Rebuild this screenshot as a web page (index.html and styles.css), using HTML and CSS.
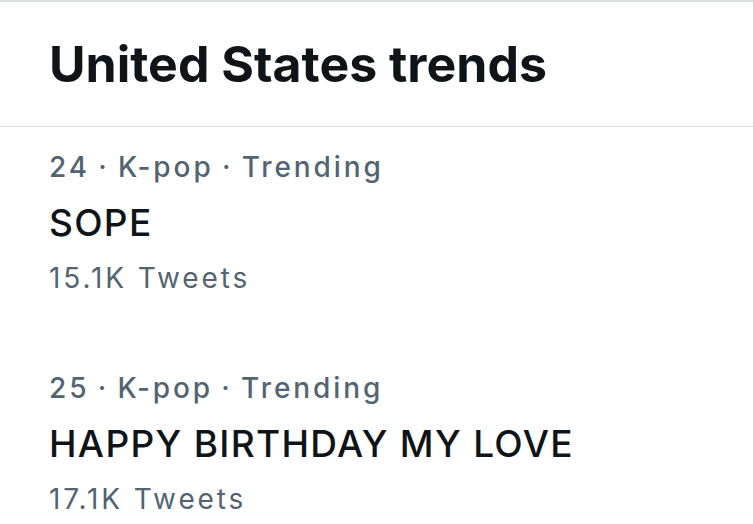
FILE: index.html
```html
<!DOCTYPE html>
<html>
<head>
<meta charset="utf-8">
<link rel="stylesheet" href="styles.css">
</head>
<body>
<div class="page">
  <header class="header">
    <h1 class="title">United States trends</h1>
  </header>
  <ul class="trends">
    <li class="trend">
      <div class="meta">24 · K-pop · Trending</div>
      <div class="name">SOPE</div>
      <div class="count">15.1K Tweets</div>
    </li>
    <li class="trend">
      <div class="meta">25 · K-pop · Trending</div>
      <div class="name">HAPPY BIRTHDAY MY LOVE</div>
      <div class="count">17.1K Tweets</div>
    </li>
  </ul>
</div>
</body>
</html>
```
FILE: styles.css
```css
html, body {
  margin: 0;
  padding: 0;
  background: #ffffff;
}
.page {
  font-family: Inter, "Liberation Sans", sans-serif;
  width: 753px;
  height: 524px;
  overflow: hidden;
  border-top: 2px solid #dcdfe2;
  box-sizing: border-box;
}
.header {
  height: 125px;
  border-bottom: 1px solid #d6dade;
  display: flex;
  align-items: center;
  padding-left: 49px;
  box-sizing: border-box;
}
.title {
  margin: 0;
  font-size: 50px;
  font-weight: 700;
  color: #0f1419;
  letter-spacing: 0;
}
.trends {
  list-style: none;
  margin: 0;
  padding: 0 0 0 49px;
}
.trend {
  padding-top: 20px;
  height: 221px;
  box-sizing: border-box;
}
.meta {
  font-size: 28px;
  color: #536471;
  font-weight: 500;
  line-height: 40px;
  letter-spacing: 2.9px;
  word-spacing: -2px;
}
.name {
  margin-top: 12px;
  font-size: 37px;
  color: #0f1419;
  font-weight: 500;
  line-height: 48px;
  letter-spacing: 1.3px;
}
.count {
  margin-top: 11px;
  font-size: 28px;
  color: #536471;
  line-height: 40px;
  letter-spacing: 2.9px;
}
```
